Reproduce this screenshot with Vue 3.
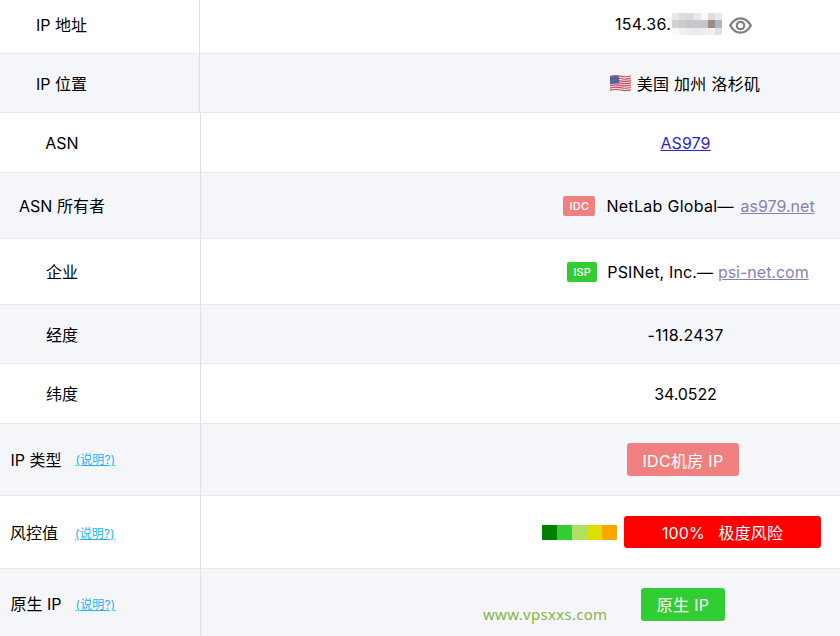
<script setup>
const mosaic = [
    [0, 0, "#e8e8e8"], [1, 0, "#dcdcdc"], [2, 0, "#d8dade"], [3, 0, "#e6e8ea"], [4, 0, "#f8f8f8"], [5, 0, "#dcdcdc"], [6, 0, "#e8e8e8"],
    [0, 1, "#d4d0ce"], [1, 1, "#cfcccc"], [2, 1, "#c4c8cc"], [3, 1, "#c8c8c8"], [4, 1, "#c9c5c2"], [5, 1, "#9b8d85"], [6, 1, "#a9b9c8"],
    [0, 2, "#fafafa"], [1, 2, "#f2efed"], [2, 2, "#eeeeee"], [3, 2, "#e8ebee"], [4, 2, "#edeeee"], [5, 2, "#f0f0f0"], [6, 2, "#dfe2e4"],
];
const riskColors = ["#008000", "#32cd32", "#b0e060", "#dfe000", "#ffa500"];
const flagStripes = [1, 3.3, 5.600, 7.900, 10.200, 12.500, 14.800];
</script>

<template>
    <div class="page">
        <div class="row row--first row--narrow">
            <div class="label">IP 地址</div>
            <div class="value value--ip">
                <span>154.36.</span>
                <svg class="mosaic" width="50" height="22" viewBox="0 0 7 3" shape-rendering="crispEdges" preserveAspectRatio="none">
                    <rect v-for="(m, i) in mosaic" :key="i" :x="m[0]" :y="m[1]" width="1" height="1" :fill="m[2]" />
                </svg>
                <svg class="eye" width="23" height="17" viewBox="0 0 23 17" fill="none" stroke="#808080">
                    <path d="M1.200 8.500C3.800 3.800 7.200 1.300 11.500 1.300S19.200 3.800 21.800 8.500C19.200 13.200 15.800 15.700 11.500 15.700S3.800 13.200 1.200 8.500Z" stroke-width="2.300" />
                    <circle cx="11.500" cy="8.500" r="3.700" stroke-width="2.200" />
                </svg>
            </div>
        </div>
        <div class="row row--alt row--second row--narrow">
            <div class="label">IP 位置</div>
            <div class="value">
                <svg class="flag" width="21" height="17" viewBox="0 0 21 17" fill="none">
                    <path d="M0 2Q5 0 10.500 1.500T21 1V15Q16 16.500 10.500 15.200T0 16Z" fill="#f0dfe2" />
                    <path v-for="y in flagStripes" :key="y" :d="`M0 ${y + 0.6}Q5 ${y - 1} 10.500 ${y + 0.2}T21 ${y}`" stroke="#c4505f" stroke-width="1.200" />
                    <path d="M0 2Q4 0.500 9 1.200V8.600Q4 8 0 9.400Z" fill="#5a5e9b" />
                </svg>
                <span>美国 加州 洛杉矶</span>
            </div>
        </div>
        <div class="row row--third">
            <div class="label">ASN</div>
            <div class="value value--tight"><a class="as-link">AS979</a></div>
        </div>
        <div class="row row--alt row--tall">
            <div class="label label--raised">ASN 所有者</div>
            <div class="value value--shift">
                <span class="tag tag--idc">IDC</span>
                <span>NetLab Global— <a class="site-link site-link--gap">as979.net</a></span>
            </div>
        </div>
        <div class="row row--tall">
            <div class="label label--raised">企业</div>
            <div class="value value--shift value--isp">
                <span class="tag tag--isp">ISP</span>
                <span>PSINet, Inc.— <a class="site-link">psi-net.com</a></span>
            </div>
        </div>
        <div class="row row--alt row--second">
            <div class="label">经度</div>
            <div class="value value--number">-118.2437</div>
        </div>
        <div class="row row--third">
            <div class="label label--raised">纬度</div>
            <div class="value value--narrow">34.0522</div>
        </div>
        <div class="row row--alt row--help">
            <div class="label label--help label--raised">IP 类型 <a class="help">(说明?)</a></div>
            <div class="value value--button"><span class="btn btn--idc">IDC机房 IP</span></div>
        </div>
        <div class="row row--help row--risk">
            <div class="label label--help label--risk">风控值 <a class="help">(说明?)</a></div>
            <div class="value value--risk">
                <div class="risk-bar">
                    <i v-for="c in riskColors" :key="c" :style="{ background: c }"></i>
                </div>
                <span class="btn btn--risk">100%&nbsp;&nbsp; 极度风险</span>
            </div>
        </div>
        <div class="row row--alt row--last">
            <div class="label label--help label--last">原生 IP <a class="help">(说明?)</a></div>
            <div class="value value--button value--native"><span class="btn btn--native">原生 IP</span></div>
        </div>
        <div class="watermark">www.vpsxxs.com</div>
    </div>
</template>

<style scoped>
.page {
    position: relative;
    width: 840px;
    height: 636px;
    overflow: hidden;
    background: #fff;
    color: #000;
    font-family: Inter, "Noto Sans CJK SC", sans-serif;
    font-size: 16px;
}

.row {
    display: grid;
    grid-template-columns: 201px 1fr;
    box-sizing: border-box;
    border-bottom: 1px solid #e9e9ed;
}

.row--narrow {
    grid-template-columns: 200px 1fr;
}

.row--alt {
    background: #f5f6fa;
}

.row--first {
    height: 54px;
}

.row--first > .label,
.row--first > .value {
    padding-bottom: 6px;
}

.row--second {
    height: 59px;
}

.row--third {
    height: 60px;
}

.row--tall {
    height: 66px;
}

.row--help {
    height: 72px;
}

.row--risk {
    height: 73px;
}

.row--last {
    height: 68px;
    border-bottom: 0;
}

.label {
    display: flex;
    align-items: center;
    justify-content: center;
    box-sizing: border-box;
    padding-right: 76px;
    border-right: 1px solid #dfdfe3;
    white-space: nowrap;
}

.label--raised {
    padding-bottom: 2px;
}

.label--help {
    padding-right: 74px;
}

.label--risk {
    padding-right: 75px;
}

.label--risk .help {
    margin-left: 17px;
}

.label--last {
    padding-bottom: 0;
}

.value {
    display: flex;
    align-items: center;
    justify-content: center;
    padding-left: 330px;
    white-space: nowrap;
    letter-spacing: 0.3px;
}

.value--ip {
    padding-left: 327px;
}

.value--tight {
    letter-spacing: 0.1px;
}

.value--narrow {
    letter-spacing: -0.1px;
}

.value--shift {
    padding-left: 337px;
}

.value--isp {
    padding-left: 335px;
    letter-spacing: 0.15px;
}

.value--number {
    padding-top: 2px;
}

.value--risk {
    padding-left: 322px;
}

.value--button {
    padding-left: 325px;
}

.value--native {
    padding-top: 2px;
}

.mosaic {
    flex: none;
    margin-left: 1px;
    margin-top: 1px;
}

.eye {
    flex: none;
    margin-left: 7px;
    margin-top: 3px;
}

.flag {
    flex: none;
    margin-right: 6px;
}

.as-link {
    color: #2a1fd6;
    text-decoration: underline;
}

.site-link {
    color: #8a7fb2;
    letter-spacing: 0;
    text-decoration: underline;
}

.site-link--gap {
    margin-left: 2px;
}

.tag {
    display: inline-flex;
    align-items: center;
    justify-content: center;
    height: 20px;
    margin-right: 11px;
    border-radius: 2px;
    color: #fff;
    font-size: 11px;
    font-weight: 500;
}

.tag--idc {
    width: 32px;
    background: #f08080;
}

.tag--isp {
    width: 30px;
    background: #32cd32;
    margin-right: 10px;
}

.help {
    margin-left: 14px;
    color: #1ab4f5;
    font-size: 12px;
    letter-spacing: 0.2px;
    text-decoration: underline;
}

.btn {
    display: inline-flex;
    align-items: center;
    justify-content: center;
    height: 33px;
    border-radius: 3px;
    color: #fff;
}

.btn--idc {
    width: 112px;
    background: #f08080;
}

.btn--native {
    width: 84px;
    background: #32cd32;
}

.btn--risk {
    width: 197px;
    height: 32px;
    margin-left: 7px;
    background: #f00;
    letter-spacing: 0.1px;
}

.risk-bar {
    display: flex;
}

.risk-bar i {
    display: block;
    width: 15px;
    height: 15px;
}

.watermark {
    position: absolute;
    left: 483px;
    top: 604px;
    color: #84b545;
    font-family: "Noto Sans", sans-serif;
    font-size: 15px;
    letter-spacing: 0.3px;
}
</style>
